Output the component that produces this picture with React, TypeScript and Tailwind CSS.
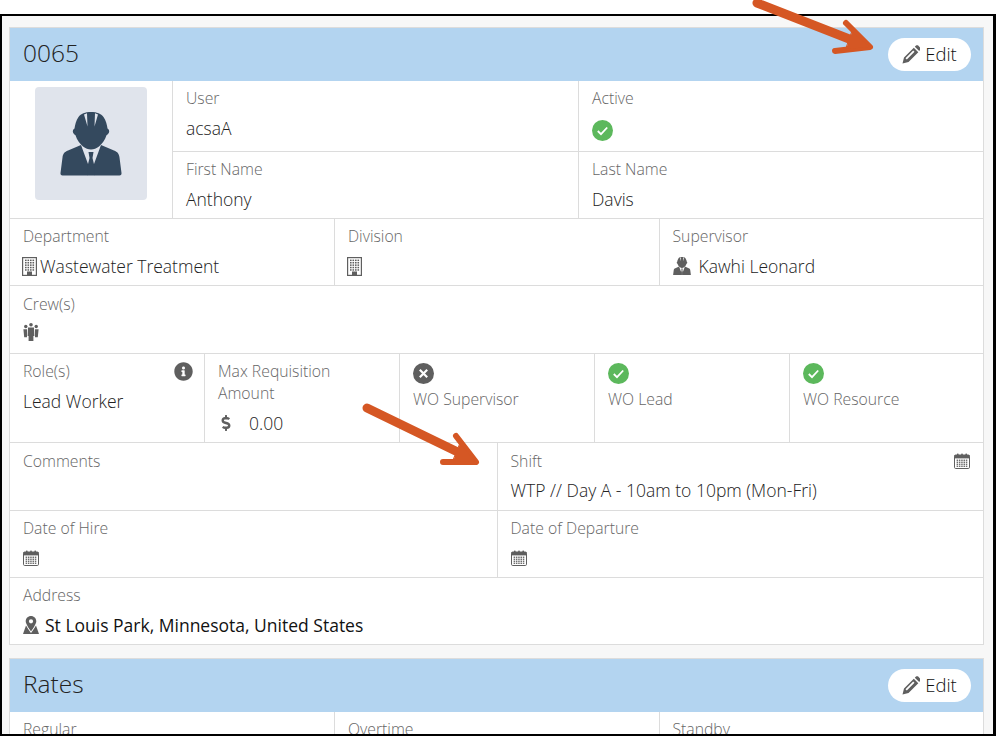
import React from "react";
import { FaInfoCircle, FaDollarSign } from "react-icons/fa";

const ICON = "#5f5f5f";

function Calendar({ className = "" }: { className?: string }) {
  const cells = [];
  for (let r = 0; r < 4; r++) for (let c = 0; c < 5; c++) cells.push(<rect key={`${r}-${c}`} x={2.6 + c * 2.3} y={6.6 + r * 2} width="1.5" height="1.3" fill={ICON} />);
  return (
    <svg viewBox="0 0 16 16" width="16" height="16" className={className}>
      <rect x="0.5" y="2" width="15" height="13.5" rx="1.2" fill="#fff" stroke={ICON} />
      <rect x="0.5" y="2" width="15" height="3.4" fill={ICON} />
      <rect x="3" y="0.4" width="1.6" height="3" rx="0.6" fill={ICON} />
      <rect x="7.2" y="0.4" width="1.6" height="3" rx="0.6" fill={ICON} />
      <rect x="11.4" y="0.4" width="1.6" height="3" rx="0.6" fill={ICON} />
      {cells}
    </svg>
  );
}

function Building({ className = "" }: { className?: string }) {
  const cells = [];
  for (let r = 0; r < 5; r++) for (let c = 0; c < 4; c++) cells.push(<rect key={`${r}-${c}`} x={3 + c * 2.5} y={2.6 + r * 2.4} width="1.6" height="1.5" fill={ICON} />);
  return (
    <svg viewBox="0 0 15 19" width="15" height="19" className={className}>
      <rect x="0.6" y="0.6" width="13.800" height="17.800" fill="#fff" stroke={ICON} strokeWidth="1.200" />
      {cells}
      <rect x="5" y="14.500" width="5" height="4" fill={ICON} />
    </svg>
  );
}

function Pencil() {
  return (
    <svg viewBox="0 0 18 19" width="18" height="19">
      <path fill={ICON} fillRule="evenodd" d="M0.500 18.500 2 12.500 11.800 2.700 16.300 7.200 6.500 17zM3.500 13.200 4.800 14.500 12.500 6.800 11.200 5.500z" />
      <path fill={ICON} d="M12.800 1.700 14 .6c.7-.6 1.500-.6 2.200 0l2 2c.6.7.6 1.500 0 2.200l-1 1.200z" />
    </svg>
  );
}

function Worker({ size, color, className = "" }: { size: number; color: string; className?: string }) {
  return (
    <svg viewBox="0 0 62 64" width={size} height={(size * 64) / 62} className={className}>
      <path fill={color} fillRule="evenodd" d="M31 0C25 0 21 1.500 18.500 5 16 8.500 15 13 14.500 16.500c-1.500 1-2 2.500-1.500 4 .4 1.200 1.500 2 2.500 2.700 1.500 5 4.500 8.500 7.500 11.300 2.500 2 5.300 3 8 3s5.500-1 8-3c3-2.800 6-6.300 7.500-11.300 1-.7 2.100-1.500 2.500-2.700 .5-1.500 0-3-1.500-4C47 13 46 8.500 43.500 5 41 1.500 37 0 31 0zM24 2.500 27.500 14.500 27 1.300zM38 2.500 34.500 14.500 35 1.300z" />
      <path fill={color} d="M21 33 8 38.500c-3.500 1.500-5 3-5.500 7L0.500 61c-.2 1.500.5 2.500 2 2.500H28V52zM41 33l13 5.500c3.500 1.500 5 3 5.500 7L61.500 61c.2 1.500-.5 2.500-2 2.500H34V52z" />
      <path fill={color} d="M28.500 40h5l-1 6 1.700 7v10.500h-6.400V53l1.700-7z" />
    </svg>
  );
}

function Group() {
  return (
    <svg viewBox="0 0 16 18" width="16" height="18" className="mb-[3px]">
      <g fill={ICON}>
        <circle cx="2.800" cy="3.500" r="1.700" /><circle cx="13.200" cy="3.500" r="1.700" /><circle cx="8" cy="1.800" r="1.800" />
        <path d="M.4 6.200h3.600v8H1.200zM12 6.200h3.600l-.8 8H12z" />
        <path d="M5 4.500h6l.4 8.500H10.400v5H5.600v-5H4.600z" />
      </g>
    </svg>
  );
}

function MapPin() {
  return (
    <svg viewBox="0 0 16 18" width="16" height="18">
      <path fill={ICON} d="M3 9.500h10L16 18H0z" />
      <path fill="none" stroke="#fff" strokeWidth="1.100" d="M2.500 6.500C3 9.500 6 13.500 8 16.200 10 13.500 13 9.500 13.500 6.500" />
      <path fill={ICON} fillRule="evenodd" d="M8 0C5 0 2.700 2.300 2.700 5.200c0 2.400 2.800 6 5.300 9.300 2.500-3.300 5.300-6.900 5.300-9.300C13.300 2.300 11 0 8 0zm0 3.200a2.100 2.100 0 1 1 0 4.200 2.100 2.100 0 0 1 0-4.200z" />
    </svg>
  );
}

function Status({ ok }: { ok: boolean }) {
  return (
    <svg viewBox="0 0 21 21" width="21" height="21" className="block">
      <circle cx="10.500" cy="10.500" r="10.500" fill={ok ? "#5cb85c" : "#5f5f5f"} />
      {ok ? (
        <path d="M5.800 11l3.200 3.200 6.200-6.700" fill="none" stroke="#fff" strokeWidth="1.800" />
      ) : (
        <path d="M6.800 6.800l7.400 7.400M14.200 6.800l-7.400 7.400" fill="none" stroke="#fff" strokeWidth="2.200" />
      )}
    </svg>
  );
}

function Label({ children }: { children: React.ReactNode }) {
  return <div className="text-[15.750px] leading-[22px] font-light text-[#666]">{children}</div>;
}

function Value({ children, className = "mt-[7px]" }: { children?: React.ReactNode; className?: string }) {
  return <div className={`flex h-[24px] items-center text-[17.500px] font-light leading-[24px] text-[#222] ${className}`}>{children}</div>;
}

function Cell({ label, children, className = "", pad = "px-[13px] pt-[6px]", valueClass }: { label: string; children?: React.ReactNode; className?: string; pad?: string; valueClass?: string }) {
  return (
    <div className={`${pad} ${className}`}>
      <Label>{label}</Label>
      <Value className={valueClass}>{children}</Value>
    </div>
  );
}

function EditButton() {
  return (
    <button className="flex h-[33px] w-[83px] items-center justify-center gap-[5px] rounded-full bg-white text-[18.500px] font-light text-[#111]">
      <Pencil />
      <span className="mb-[1px]">Edit</span>
    </button>
  );
}

function Header({ title }: { title: string }) {
  return (
    <div className="flex h-[53px] items-center justify-between bg-[#b3d4f0] pl-[13px] pr-[12px]">
      <span className="mb-[2px] text-[24.500px] font-light text-[#222]">{title}</span>
      <EditButton />
    </div>
  );
}

const row = "flex border-b border-[#dcdcdc]";
const sep = "border-r border-[#dcdcdc]";

function Flag({ ok, label, className = "" }: { ok: boolean; label: string; className?: string }) {
  return (
    <div className={`px-[13px] pt-[9px] ${className}`}>
      <Status ok={ok} />
      <div className="mt-[4px]"><Label>{label}</Label></div>
    </div>
  );
}

function Arrow({ shaft, head, fill }: { shaft: string; head: string; fill: string }) {
  return (
    <>
      <path d={shaft} strokeWidth="9" />
      <path d={head} strokeWidth="6" />
      <path d={fill} fill="#d55724" strokeWidth="1" />
    </>
  );
}

export default function App() {
  return (
    <div className="relative h-[736px] w-[996px] overflow-hidden bg-white pt-[14px] font-['Open_Sans',sans-serif]">
      <div className="h-[722px] overflow-hidden border-2 border-r-[3px] border-black bg-[#f7f7f7] pl-[7px] pr-[9px] pt-[11px]">
        <div className="border border-b-0 border-[#dcdcdc] bg-white">
          <Header title="0065" />
          <div className={`${row} h-[138px]`}>
            <div className={`${sep} w-[163px] shrink-0 pl-[25px] pt-[6px]`}>
              <div className="flex h-[113px] w-[112px] items-center justify-center rounded-[4px] bg-[#e0e4ec]">
                <Worker size={62} color="#34495e" />
              </div>
            </div>
            <div className="flex-1">
              <div className="flex h-[71px] border-b border-[#dcdcdc]">
                <Cell label="User" className={`${sep} w-[406px]`}>acsaA</Cell>
                <Cell label="Active" className="flex-1" valueClass="mt-[9px]"><Status ok /></Cell>
              </div>
              <div className="flex h-[66px]">
                <Cell label="First Name" className={`${sep} w-[406px]`}>Anthony</Cell>
                <Cell label="Last Name" className="flex-1">Davis</Cell>
              </div>
            </div>
          </div>
          <div className={`${row} h-[67px]`}>
            <Cell label="Department" className={`${sep} w-[325px]`}><Building className="-ml-[1px] mr-[3px]" />Wastewater Treatment</Cell>
            <Cell label="Division" className={`${sep} w-[325px]`}><Building className="-ml-[1px]" /></Cell>
            <Cell label="Supervisor" pad="pl-[12.500px] pr-[13px] pt-[6px]" className="flex-1"><Worker size={18} color={ICON} className="mr-[8px]" />Kawhi Leonard</Cell>
          </div>
          <div className={`${row} h-[68px]`}>
            <Cell label="Crew(s)" pad="px-[13px] pt-[7px]" valueClass="mt-[6px]"><Group /></Cell>
          </div>
          <div className={`${row} h-[89px]`}>
            <div className={`${sep} relative w-[195px] px-[13px] pt-[6px]`}>
              <Label>Role(s)</Label>
              <FaInfoCircle size={19} color={ICON} className="absolute right-[11px] top-[8px]" />
              <Value>Lead Worker</Value>
            </div>
            <div className={`${sep} w-[195px] px-[13px] pt-[6px]`}>
              <Label>Max Requisition Amount</Label>
              <Value>
                <FaDollarSign size={16} color={ICON} className="mr-[15px]" />0.00
              </Value>
            </div>
            <Flag ok={false} label="WO Supervisor" className={`${sep} w-[195px]`} />
            <Flag ok label="WO Lead" className={`${sep} w-[195px]`} />
            <Flag ok label="WO Resource" className="flex-1" />
          </div>
          <div className={`${row} h-[68px]`}>
            <Cell label="Comments" pad="px-[13px] pt-[7px]" className={`${sep} w-[488px]`} />
            <div className="relative flex-1 pl-[12.500px] pr-[13px] pt-[7px]">
              <Label>Shift</Label>
              <Calendar className="absolute right-[13px] top-[10px]" />
              <Value className="mt-[6px]">WTP // Day A - 10am to 10pm (Mon-Fri)</Value>
            </div>
          </div>
          <div className={`${row} h-[67px]`}>
            <Cell label="Date of Hire" className={`${sep} w-[488px]`}><Calendar /></Cell>
            <Cell label="Date of Departure" pad="pl-[12.500px] pr-[13px] pt-[6px]" className="flex-1"><Calendar /></Cell>
          </div>
          <div className={`${row} h-[67px]`}>
            <Cell label="Address"><MapPin /><span className="ml-[6px] font-normal text-[#111]">St Louis Park, Minnesota, United States</span></Cell>
          </div>
        </div>
        <div className="mt-[13px] border border-b-0 border-[#dcdcdc] bg-white">
          <Header title="Rates" />
          <div className="flex h-[67px]">
            <Cell label="Regular" className={`${sep} w-[325px]`} />
            <Cell label="Overtime" className={`${sep} w-[325px]`} />
            <Cell label="Standby" pad="pl-[12.500px] pr-[13px] pt-[6px]" className="flex-1" />
          </div>
        </div>
      </div>
      <svg className="absolute left-0 top-0" width="996" height="736" fill="none" stroke="#d55724" strokeLinecap="round" strokeLinejoin="round">
        <Arrow shaft="M757 3 L862 44" head="M846 23 L870 47 L835 51" fill="M852 32 L870 47 L846 49 Z" />
        <Arrow shaft="M367 408 L468 457" head="M456 436 L476 462 L443 462" fill="M460 444 L476 462 L453 461 Z" />
      </svg>
    </div>
  );
}
